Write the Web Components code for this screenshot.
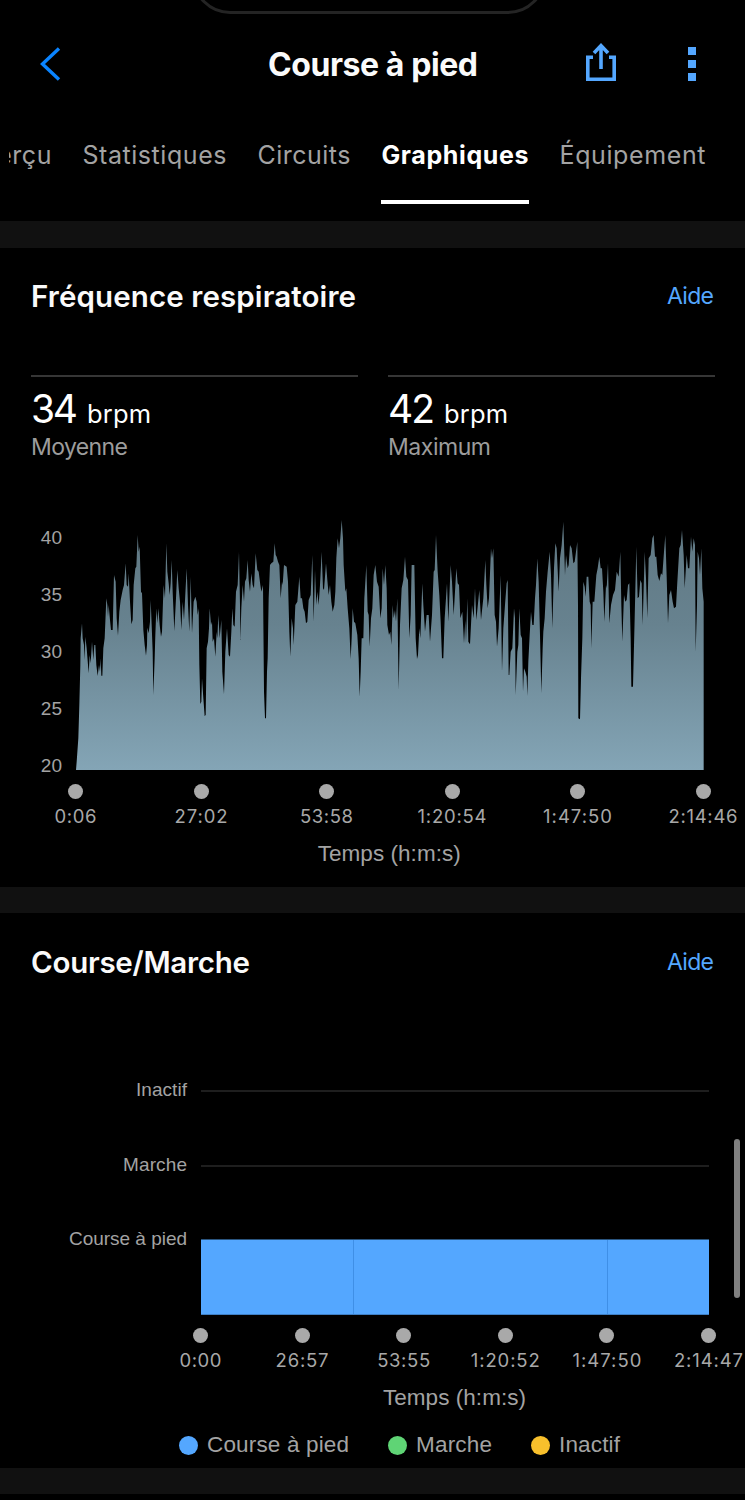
<!DOCTYPE html>
<html lang="fr">
<head>
<meta charset="utf-8">
<title>Course à pied</title>
<style>
  html, body { margin: 0; background: #000; }
  body { width: 745px; height: 1500px; overflow: hidden; font-family: Inter, "Liberation Sans", sans-serif; color: #fff; }
</style>
</head>
<body>
<activity-page></activity-page>

<script>
const define = (name, html, ready) => {
  const t = document.createElement('template');
  t.innerHTML = html.trim();
  customElements.define(name, class extends HTMLElement {
    connectedCallback() {
      if (this.shadowRoot) return;
      this.attachShadow({ mode: 'open' }).appendChild(t.content.cloneNode(true));
      if (ready) ready(this, this.shadowRoot);
    }
  });
};

/* Text tracked so that its line takes exactly the given width. */
define('fit-label', `<style>:host { display: inline-block; white-space: nowrap; } span { display: inline-block; }</style><span><slot></slot></span>`,
  (el, root) => {
    const w = +el.getAttribute('w'), span = root.querySelector('span');
    if (!w) return;
    const n = el.textContent.length;
    const ls = (w - span.getBoundingClientRect().width) / (n - 1);
    span.style.letterSpacing = ls + 'px';
    span.style.marginRight = -ls + 'px';
  });

define('nav-bar', `
  <style>
    :host { display: grid; grid-template-columns: 1fr auto 1fr; align-items: center; height: 128px; position: relative; }
    .notch { position: absolute; left: 192px; top: -74px; width: 348px; height: 82px; border: 3px solid #242424; border-radius: 38px; }
    svg { display: block; }
    .back { margin-left: 38px; }
    h1 { margin: 1px 0 0 1px; font-size: 32px; line-height: 40px; font-weight: 650; color: #fafafa; }
    .actions { display: flex; justify-content: flex-end; align-items: center; gap: 69px; padding-right: 49px; }
    .share { margin-top: -2px; }
  </style>
  <div class="notch"></div>
  <svg class="back" width="24" height="36" viewBox="0 0 24 36" fill="none" stroke="#0a84ff" stroke-width="3.4"><path d="M21 2.5 4.5 18 21 33.5"/></svg>
  <h1><fit-label w="210">Course à pied</fit-label></h1>
  <div class="actions">
    <svg class="share" width="36" height="42" viewBox="0 0 36 42" fill="none" stroke="#54a7ff" stroke-width="3.6"><path d="M10 15.3H4.8V37.2H31.2V15.3H26M18 27V4M11 11 18 3.6 25 11"/></svg>
    <svg width="8" height="36" viewBox="0 0 8 36" fill="#54a7ff"><path d="M0 1H8V9H0ZM0 14H8V22H0ZM0 27H8V35H0Z"/></svg>
  </div>`);

define('tab-item', `
  <style>
    :host { display: flex; flex-direction: column; align-items: center; justify-content: space-between; flex: none; height: 76px; font-size: 25px; line-height: 54px; color: #a3a3a3; }
    :host([active]) { color: #fff; font-weight: 650; }
    i { display: none; width: 100%; height: 4px; background: #fff; }
    :host([active]) i { display: block; }
  </style>
  <slot></slot><i></i>`);

define('tab-strip', `
  <style>
    :host { display: flex; justify-content: flex-end; gap: 31px; box-sizing: border-box; height: 93px; margin-left: 9px; padding-right: 39.5px; overflow: hidden; }
  </style>
  <slot></slot>`);

define('section-gap', `<style>:host { display: block; height: var(--h, 26px); background: #111; }</style>`);

define('section-head', `
  <style>
    :host { display: flex; justify-content: space-between; align-items: center; padding: 0 31px; height: 40px; }
    h2 { margin: 0; font-size: 29.5px; line-height: 40px; font-weight: 600; color: #fafafa; }
    a { font-size: 23px; line-height: 40px; color: #54a7ff; }
  </style>
  <h2><slot></slot></h2><a><fit-label w="47">Aide</fit-label></a>`);

define('stat-cell', `
  <style>
    :host { display: block; flex: 1; border-top: 2px solid #363636; padding-top: 12px; }
    .v { display: flex; align-items: baseline; gap: 9px; line-height: 40px; color: #fff; }
    .n { font-size: 39px; } .u { font-size: 25.5px; }
    .l { font-size: 23px; line-height: 26px; color: #9c9c9c; }
  </style>
  <div class="v"><span class="n"><slot name="n"></slot></span><span class="u"><fit-label w="64">brpm</fit-label></span></div>
  <div class="l"><slot></slot></div>`);

/* Row of dots with a time below each; ticks have no width of their own, so they centre on the axis. */
define('time-axis', `
  <style>
    :host { display: block; }
    .ticks { display: flex; justify-content: space-between; }
    .t { width: 0; display: flex; flex-direction: column; align-items: center; font-size: 18.5px; line-height: 24px; color: #a8a8a8; }
    .t i { flex: none; width: 15px; height: 15px; border-radius: 50%; background: #a9a9a9; margin-bottom: 5px; }
    .title { text-align: center; font: 22.5px/30px "Liberation Sans", sans-serif; color: #a3a3a3; margin-top: 11px; }
  </style>
  <div class="ticks"></div>
  <div class="title"><fit-label w="143">Temps (h:m:s)</fit-label></div>`,
  (el, root) => {
    root.querySelector('.ticks').innerHTML = el.getAttribute('times').split(' ').map(s => {
      const w = s.length === 4 ? 42 : s.length === 5 ? 53 : 69;
      return `<div class="t"><i></i><fit-label w="${w}">${s}</fit-label></div>`;
    }).join('');
  });

/* Breathing rate samples in thirds of a pixel, in four stretches. */
const RATE = [
  [0, '48,795 50,770 55,700 58,600 61,480 62,400 66,355 68,400 72,420 74,465 76,395 80,430 86,505 89,450 92,475 96,410 100,465 103,420 106,420 109,480 113,513 117,480 120,500 122,460 124,512 127,512 130,430 134,400 139,280 142,300 144,335 146,300 150,345 153,375 158,375 162,210 167,230 170,340 174,392 178,320 182,285 188,255 192,240 197,175 200,240 204,245 206,205 210,290 214,358 218,345 221,240 226,190 229,185 233,90 236,140 239,125 243,260 246,265 250,375 254,420 258,452 261,420 262,368 266,385 270,350 272,285 275,360 278,440 280,570 284,460 286,390 289,310 292,355 295,310 299,360 303,395 306,380 309,290 311,240 315,280 319,115 322,200 326,235 329,270 332,235 335,165 338,260 343,378 348,280 352,195 356,250 360,290 364,375 368,290 372,345 380,190 384,300 388,380 392,215 396,385 401,290 406,275 410,290 413,330 416,310 418,480 421,597 424,590 426,520 430,580 434,633 437,630 440,430 444,410 447,370 449,310 453,360 456,350 458,410 462,400 466,455 470,380 472,400 475,330 479,400'],
  [480, '4,345 7,500 12,568 16,440 21,370 26,450 30,455 34,380 37,310 40,360 44,365 48,260 53,240 57,140 60,300 61,405 64,310 68,240 72,290 75,230 79,220 83,165 86,225 90,260 94,205 98,240 102,250 107,145 112,195 116,200 121,240 124,260 129,240 132,560 135,640 138,640 141,500 143,460 146,280 150,180 154,175 160,170 164,115 167,150 170,155 174,170 178,180 182,280 186,230 188,240 192,180 200,185 204,230 208,380 211,455 215,340 219,370 221,420 226,300 232,290 238,215 242,280 246,280 250,310 254,320 258,355 262,350 266,285 272,270 277,150 281,350 285,195 289,300 292,260 296,300 300,240 305,140 309,250 312,255 318,175 322,225 326,270 330,240 334,290 338,320 343,300 346,260 349,160 353,100 357,130 361,100 365,45 369,100 371,180 376,260 379,250 383,310 388,370 392,462 395,400 398,310 402,350 406,355 412,390 416,460 419,575 422,500 425,400 430,400 433,280 439,180 443,320 446,330 449,425 453,340 457,310 461,210 466,180 471,230 476,245'],
  [960, '1,340 5,310 8,190 12,240 16,180 20,250 22,360 27,390 31,380 34,420 38,300 41,340 45,315 48,350 52,280 56,555 60,360 65,250 70,225 75,155 79,215 84,225 88,400 92,330 95,180 103,180 107,400 111,462 114,450 118,370 121,400 127,235 130,300 135,380 140,330 146,330 150,410 156,330 161,200 164,195 168,90 173,200 178,270 182,350 186,460 190,460 194,340 201,235 205,350 212,180 216,230 221,330 229,190 233,235 237,240 241,340 247,320 252,415 256,345 258,415 262,280 265,410 270,418 276,300 281,340 285,250 289,345 298,255 303,345 310,280 316,165 319,240 323,310 327,280 333,130 336,160 340,130 344,330 348,350 351,425 356,370 362,210 366,500 370,370 375,300 380,235 383,225 386,510 388,510 392,440 397,430 402,310 405,340 407,570 412,440 415,420 418,310 422,390 426,400 429,560 432,490 436,500 440,515 442,572 445,470 449,390 453,320 457,360 461,360 465,280 468,240 472,160 476,230'],
  [1440, '0,390 4,565 8,430 10,380 14,340 18,260 23,200 29,140 33,210 37,370 42,190 46,115 50,130 56,260 60,160 65,120 70,50 75,210 78,150 83,190 86,180 90,120 95,130 100,175 104,170 108,140 112,110 114,300 115,640 120,643 123,520 127,400 130,230 134,245 137,275 140,215 145,215 149,290 152,300 154,430 158,290 163,290 169,210 173,190 178,155 182,190 186,190 190,260 193,350 198,240 200,250 204,175 208,355 213,300 219,270 225,255 230,200 236,215 241,140 244,300 247,410 252,270 256,290 260,285 264,240 268,235 272,400 274,545 279,545 284,340 289,125 293,280 297,275 301,225 305,235 308,360 314,140 318,220 322,340 326,160 332,150 337,100 341,90 345,155 349,155 353,210 358,228 363,205 367,210 372,140 376,90 380,215 384,355 388,270 393,255 398,290 402,310 408,305 412,230 418,130 422,120 426,75 431,150 434,250 440,150 444,190 448,190 453,95 457,140 461,100 465,120 467,440 471,300 473,140 477,160 480,210 484,130 487,250 491,290 491,795']
];

define('rate-chart', `
  <style>
    :host { display: grid; grid-template-columns: 62px 628px; column-gap: 13.5px; height: 265px; }
    .y { display: flex; flex-direction: column; justify-content: space-between; align-items: flex-end; margin: 23px 0 -6px; font: 19px/20px "Liberation Sans", sans-serif; color: #a3a3a3; height: 248px; }
    svg { display: block; }
  </style>
  <div class="y"><span>40</span><span>35</span><span>30</span><span>25</span><span>20</span></div>
  <svg width="628" height="265" viewBox="48 0 1884 795" preserveAspectRatio="none">
    <defs><linearGradient id="g" gradientUnits="userSpaceOnUse" x1="0" y1="45" x2="0" y2="795">
      <stop offset="0" stop-color="#607883"/><stop offset=".42" stop-color="#67828f"/><stop offset="1" stop-color="#84a5b6"/></linearGradient></defs>
    <polygon fill="url(#g)"/>
  </svg>`,
  (el, root) => {
    const pts = RATE.flatMap(([dx, s]) => s.split(' ').map(p => {
      const [x, y] = p.split(',').map(Number);
      return `${x + dx},${y}`;
    }));
    root.querySelector('polygon').setAttribute('points', pts.join(' '));
  });

define('state-chart', `
  <style>
    :host { display: grid; grid-template-columns: 187px 508px; column-gap: 14px; grid-template-rows: 75px 74px 76px; }
    .l { text-align: right; font: 19px/20px "Liberation Sans", sans-serif; color: #a3a3a3; margin-top: -10px; }
    .r { border-top: 2px solid #1e1e1e; }
    .b { display: grid; grid-template-columns: 152px 253px 1fr; column-gap: 1px; background: #3f8fe6; border-bottom: 1px solid #3f7fc4; border-top: 1px solid #2a5580; }
    .b i { background: #54a7ff; }
  </style>
  <div class="l"><fit-label w="51">Inactif</fit-label></div><div class="r"></div>
  <div class="l"><fit-label w="64">Marche</fit-label></div><div class="r"></div>
  <div class="l"><fit-label w="118">Course à pied</fit-label></div><div class="b"><i></i><i></i><i></i></div>`);

define('legend-item', `
  <style>
    :host { display: flex; align-items: center; gap: 9px; font: 22.5px/30px "Liberation Sans", sans-serif; color: #a3a3a3; }
    i { width: 19px; height: 19px; border-radius: 50%; background: var(--c); }
  </style>
  <i></i><slot></slot>`);

define('scroll-thumb', `<style>:host { display: block; position: absolute; left: 734px; top: 1139px; width: 6px; height: 159px; border-radius: 3px; background: #808080; }</style>`);

define('activity-page', `
  <style>
    :host { display: flex; flex-direction: column; position: relative; width: 745px; height: 1500px; background: #000; overflow: hidden; }
    .a, .c { display: flex; flex-direction: column; box-sizing: border-box; }
    .a { height: 639px; padding-top: 28px; }
    .c { height: 555px; padding-top: 29px; }
    .stats { display: flex; gap: 30px; margin: 59px 30px 0 31px; }
    rate-chart { margin-top: 45px; }
    .a time-axis { margin: 14px 42px 0 75.5px; }
    state-chart { margin-top: 108px; }
    .c time-axis { margin: 13px 36.5px 0 200.5px; }
    .legend { display: flex; margin: 17px 0 0 179px; }
    .legend legend-item + legend-item { margin-left: 39px; }
  </style>
  <nav-bar></nav-bar>
  <tab-strip>
    <tab-item><fit-label w="88">Aperçu</fit-label></tab-item>
    <tab-item><fit-label w="144">Statistiques</fit-label></tab-item>
    <tab-item><fit-label w="93">Circuits</fit-label></tab-item>
    <tab-item active><fit-label w="147">Graphiques</fit-label></tab-item>
    <tab-item><fit-label w="146">Équipement</fit-label></tab-item>
  </tab-strip>
  <section-gap style="--h:27px"></section-gap>
  <div class="a">
    <section-head><fit-label w="325">Fréquence respiratoire</fit-label></section-head>
    <div class="stats">
      <stat-cell><fit-label slot="n" w="47">34</fit-label><fit-label w="97">Moyenne</fit-label></stat-cell>
      <stat-cell><fit-label slot="n" w="47">42</fit-label><fit-label w="103">Maximum</fit-label></stat-cell>
    </div>
    <rate-chart></rate-chart>
    <time-axis times="0:06 27:02 53:58 1:20:54 1:47:50 2:14:46"></time-axis>
  </div>
  <section-gap></section-gap>
  <div class="c">
    <section-head><fit-label w="219">Course/Marche</fit-label></section-head>
    <state-chart></state-chart>
    <time-axis times="0:00 26:57 53:55 1:20:52 1:47:50 2:14:47"></time-axis>
    <div class="legend">
      <legend-item style="--c:#54a7ff"><fit-label w="142">Course à pied</fit-label></legend-item>
      <legend-item style="--c:#5fd475"><fit-label w="76">Marche</fit-label></legend-item>
      <legend-item style="--c:#f8c02c"><fit-label w="61">Inactif</fit-label></legend-item>
    </div>
  </div>
  <section-gap></section-gap>
  <scroll-thumb></scroll-thumb>`);
</script>
</body>
</html>
